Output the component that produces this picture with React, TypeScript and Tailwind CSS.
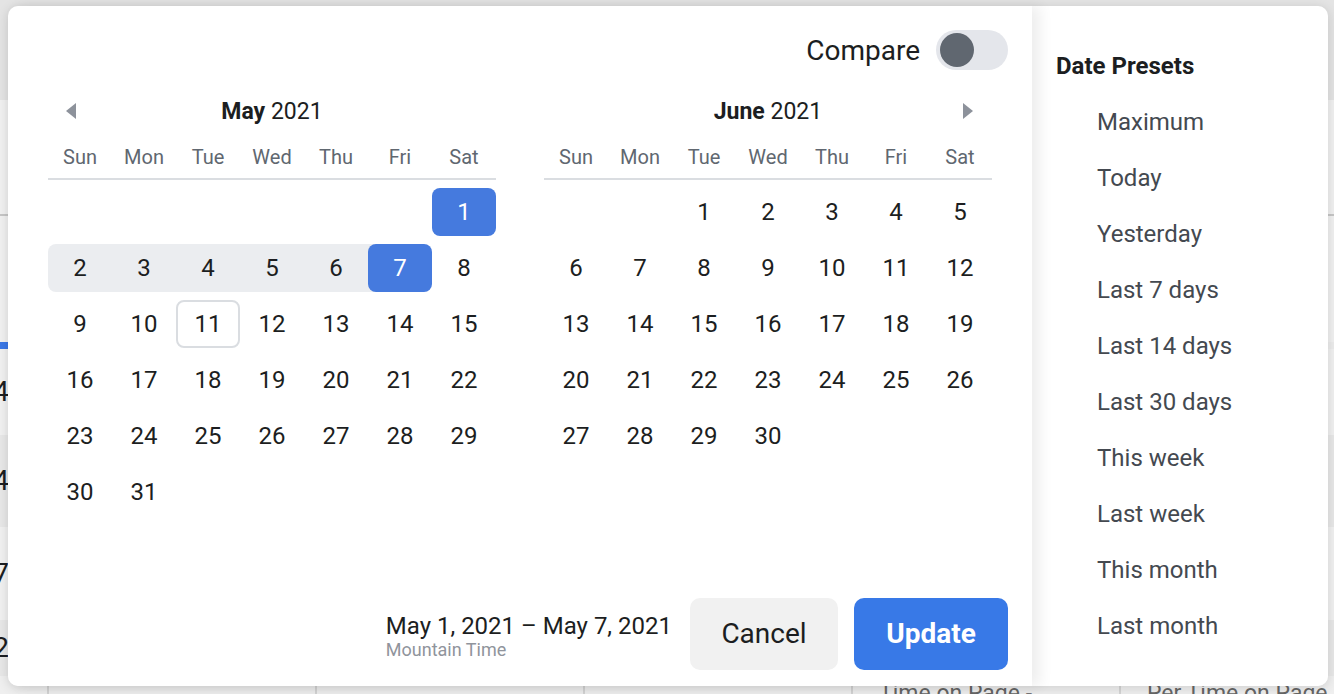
import React from "react";

const DAY_NAMES = ["Sun", "Mon", "Tue", "Wed", "Thu", "Fri", "Sat"];
const PRESETS = [
    "Maximum",
    "Today",
    "Yesterday",
    "Last 7 days",
    "Last 14 days",
    "Last 30 days",
    "This week",
    "Last week",
    "This month",
    "Last month",
];

const Arrow: React.FC<{ dir: "left" | "right" }> = ({ dir }) => (
    <svg width="10" height="16" viewBox="0 0 10 16">
        <polygon points={dir === "left" ? "10,0 10,16 0,8" : "0,0 0,16 10,8"} fill="#8d929b" />
    </svg>
);

type CalProps = {
    month: string;
    year: number;
    offset: number;
    days: number;
    range?: [number, number];
    today?: number;
    arrow?: "left" | "right";
};

const DayCell: React.FC<{ day: number; col: number; range?: [number, number]; today?: number }> = ({
    day,
    col,
    range,
    today,
}) => {
    const isStart = range && day === range[0];
    const isEnd = range && day === range[1];
    const inRange = range && day > range[0] && day < range[1];

    if (isStart || isEnd) {
        // half strip of range colour behind the blue box
        let wrap = "";
        if (isStart && !isEnd && col !== 6) wrap = "bg-[linear-gradient(to_right,transparent_50%,#ebedf0_50%)]";
        if (isEnd && !isStart && col !== 0) wrap = "bg-[linear-gradient(to_right,#ebedf0_50%,transparent_50%)]";
        return (
            <div className={`h-[48px] ${wrap}`}>
                <div className="h-full rounded-[8px] bg-[#457ade] text-white flex items-center justify-center">
                    {day}
                </div>
            </div>
        );
    }

    if (inRange) {
        return (
            <div
                className={`h-[48px] bg-[#ebedf0] flex items-center justify-center ${
                    col === 0 ? "rounded-l-[8px]" : ""
                } ${col === 6 ? "rounded-r-[8px]" : ""}`}
            >
                {day}
            </div>
        );
    }

    return (
        <div
            className={`h-[48px] flex items-center justify-center rounded-[8px] ${
                day === today ? "border-2 border-[#dadde1]" : ""
            }`}
        >
            {day}
        </div>
    );
};

const Calendar: React.FC<CalProps> = ({ month, year, offset, days, range, today, arrow }) => {
    const cells: (number | null)[] = [];
    for (let i = 0; i < offset; i++) cells.push(null);
    for (let d = 1; d <= days; d++) cells.push(d);

    return (
        <div className="w-[448px]">
            <div className="flex items-center h-[34px]">
                <div className="w-[60px] pl-[18px] flex items-center">{arrow === "left" && <Arrow dir="left" />}</div>
                <div className="flex-1 text-center text-[23px] leading-[34px] pt-[2px] text-[#1c1e21]">
                    <span className="font-bold">{month}</span> {year}
                </div>
                <div className="w-[60px] pr-[19px] flex items-center justify-end">
                    {arrow === "right" && <Arrow dir="right" />}
                </div>
            </div>
            <div className="mt-[16px] pb-[8px] border-b-2 border-[#dadde1] grid grid-cols-7 text-center text-[20px] leading-[26px] text-[#606770]">
                {DAY_NAMES.map((n) => (
                    <div key={n}>{n}</div>
                ))}
            </div>
            <div className="mt-[8px] grid grid-cols-7 gap-y-[8px] text-[24px] text-[#1c1e21]">
                {cells.map((d, i) =>
                    d === null ? (
                        <div key={i} className="h-[48px]" />
                    ) : (
                        <DayCell key={i} day={d} col={i % 7} range={range} today={today} />
                    )
                )}
            </div>
        </div>
    );
};

const Backdrop = () => {
    const rows = [
        { h: "h-[86px]", bg: "bg-[#f1f1f1]", v: "4" },
        { h: "h-[92px]", bg: "bg-[#e8e8e8]", v: "4" },
        { h: "h-[93px]", bg: "bg-[#f1f1f1]", v: "7" },
        { h: "h-[56px]", bg: "bg-[#e8e8e8]", v: "2" },
    ];
    return (
        <div className="flex flex-col text-[#1c1e21]">
            <div className="h-[100px] bg-[#e4e4e4]" />
            <div className="h-[114px] bg-[#f1f1f1]" />
            <div className="h-[2px] bg-[#c6c6c6]" />
            <div className="h-[126px] bg-[#f1f1f1]" />
            <div className="h-[7px] w-[60px] bg-[#3b78e7]" />
            {rows.map((r, i) => (
                <div key={i} className={`${r.h} ${r.bg} flex items-center`}>
                    <div className="w-[9px] flex justify-end text-[28px] leading-none">{r.v}</div>
                </div>
            ))}
            <div className="h-[30px] bg-[#efefef] flex text-[23px] leading-[28px] text-[#666] pt-[4px]">
                <div className="w-[49px] border-r-2 border-[#d4d4d4]" />
                <div className="w-[268px] border-r-2 border-[#d4d4d4]" />
                <div className="w-[268px] border-r-2 border-[#d4d4d4]" />
                <div className="w-[268px] border-r-2 border-[#d4d4d4]" />
                <div className="w-[268px] border-r-2 border-[#d4d4d4] pl-[26px] whitespace-nowrap">Time on Page - ...</div>
                <div className="w-[213px] pl-[26px] whitespace-nowrap overflow-hidden">Per Time on Page</div>
            </div>
        </div>
    );
};

export default function App() {
    return (
        <div className="relative w-[1334px] h-[694px] overflow-hidden bg-[#ececec] font-['Roboto',sans-serif]">
            <Backdrop />
            <div className="absolute left-[8px] top-[6px] w-[1320px] h-[680px] flex rounded-[10px] shadow-[0_2px_12px_rgba(0,0,0,0.14)]">
                <div className="relative z-10 w-[1024px] h-full bg-white rounded-l-[10px] shadow-[8px_0_14px_rgba(0,0,0,0.07)] flex flex-col pl-[40px] pr-[24px] pt-[24px] pb-[16px]">
                    <div className="h-[40px] flex items-center justify-end gap-[16px]">
                        <span className="text-[28px] leading-[40px] pt-[2px] text-[#1c1e21]">Compare</span>
                        <div className="w-[72px] h-[40px] rounded-full bg-[#e4e6eb] flex items-center pl-[4px]">
                            <div className="w-[34px] h-[34px] rounded-full bg-[#606770]" />
                        </div>
                    </div>
                    <div className="mt-[24px] flex gap-[48px]">
                        <Calendar month="May" year={2021} offset={6} days={31} range={[1, 7]} today={11} arrow="left" />
                        <Calendar month="June" year={2021} offset={2} days={30} arrow="right" />
                    </div>
                    <div className="mt-auto flex items-center justify-end gap-[16px]">
                        <div className="mr-[2px] pt-[4px] flex flex-col">
                            <span className="text-[24px] leading-[28px] text-[#1c1e21]">May 1, 2021 – May 7, 2021</span>
                            <span className="text-[18px] leading-[20px] text-[#90949c]">Mountain Time</span>
                        </div>
                        <button className="w-[148px] h-[72px] rounded-[10px] bg-[#f1f1f1] text-[28px] text-[#1c1e21]">
                            Cancel
                        </button>
                        <button className="w-[154px] h-[72px] rounded-[10px] bg-[#3879e7] text-[28px] font-bold text-white">
                            Update
                        </button>
                    </div>
                </div>
                <div className="w-[296px] h-full bg-white rounded-r-[10px] pt-[32px] pl-[24px]">
                    <div className="h-[56px] flex items-center text-[24px] font-bold text-[#1c1e21]">Date Presets</div>
                    {PRESETS.map((p) => (
                        <div key={p} className="h-[56px] pl-[41px] flex items-center text-[24px] text-[#444950]">
                            {p}
                        </div>
                    ))}
                </div>
            </div>
        </div>
    );
}
